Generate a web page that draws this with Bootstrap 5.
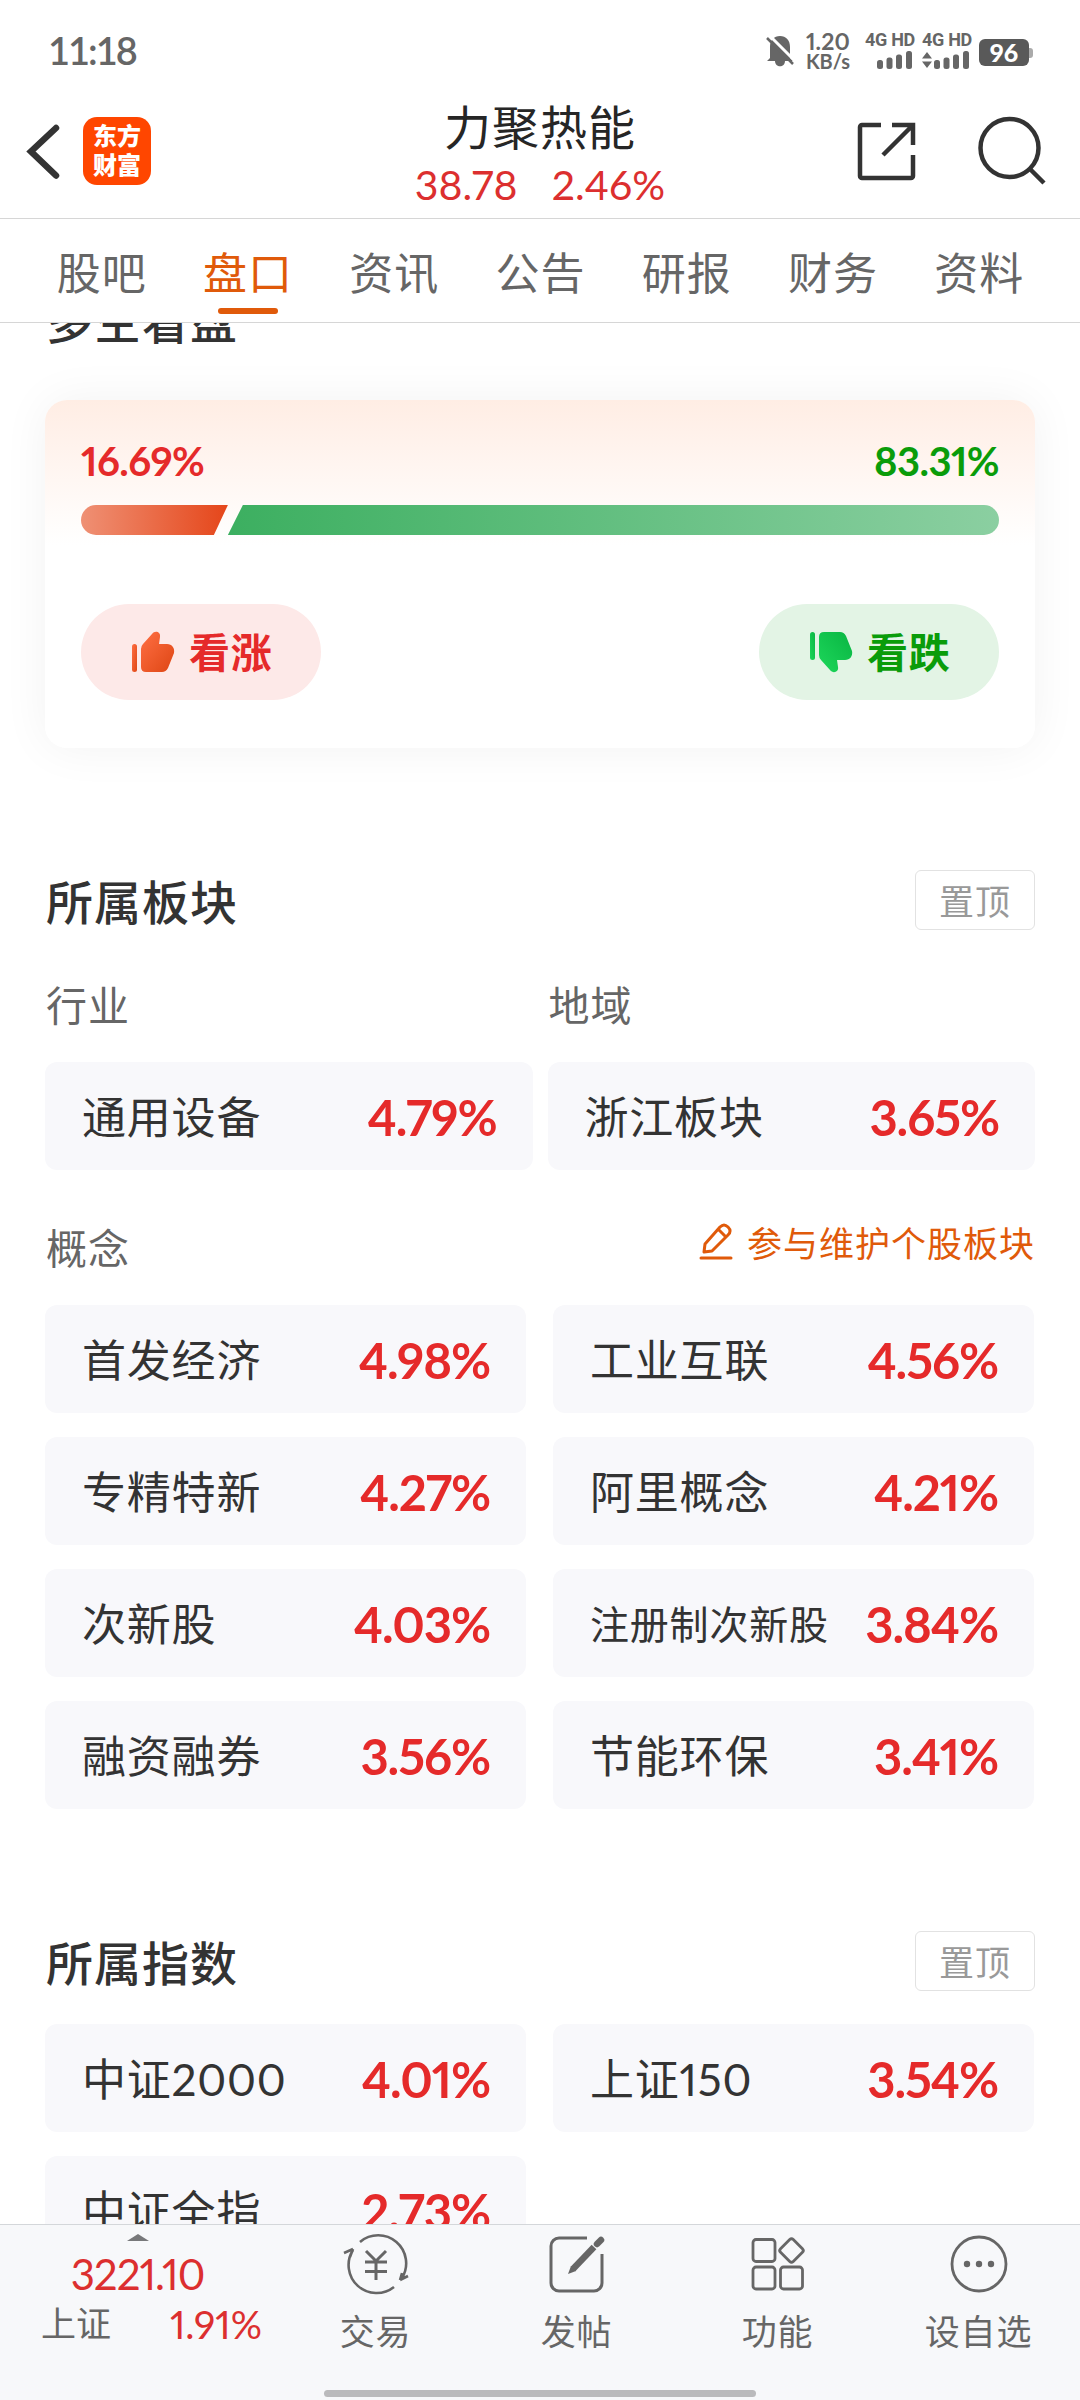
<!DOCTYPE html>
<html lang="zh-CN">
<head>
<meta charset="utf-8">
<meta name="viewport" content="width=device-width, initial-scale=1">
<title>力聚热能 - 盘口</title>
<link rel="stylesheet" href="https://cdn.jsdelivr.net/npm/bootstrap@5.3.0/dist/css/bootstrap.min.css">
<style>
  :root { --up:#e52a2a; --down:#0a9c0a; --ink:#333; --soft:#666; --brand:#e05a0a; }
  body { font-family:"Noto Sans CJK SC","Noto Sans",sans-serif; color:var(--ink); background:#fff; }
  svg { display:block; flex:none; overflow:visible; }
  .screen { width:1080px; height:2400px; overflow:hidden; }
  .num { font-family:Lato,"Noto Sans",sans-serif; white-space:nowrap; font-feature-settings:"pnum"; }
  .up { color:var(--up); } .down { color:var(--down); }

  .status { height:104px; padding:0 48px 0 48px; color:#666; }
  .clock { font-size:38px; font-weight:600; line-height:100px; letter-spacing:-2px; font-feature-settings:normal; }
  .sys { padding-top:32px; }
  .speed { width:46px; margin:0 14px 0 11px; font-weight:700; text-align:center; }
  .speed div { font-size:23px; line-height:19px; letter-spacing:.2px; }
  .speed div + div { font-size:20px; line-height:20px; letter-spacing:0; }
  .sim { width:48px; margin-right:9px; }
  .sim div { font:700 18px/15px Roboto,sans-serif; letter-spacing:-.3px; white-space:nowrap; }
  .sim svg { margin-top:-1px; }
  .power { width:50px; height:27px; margin:7px 3px 0 0; border-radius:6px; background:#595959; color:#fff; font-size:25px; font-weight:900; line-height:26px; position:relative; }
  .power::after { content:""; position:absolute; left:50px; top:9px; width:4px; height:10px; border-radius:0 3px 3px 0; background:#aaa; }

  .top { height:115px; border-bottom:1px solid #d6d6d6; }
  .side { width:300px; }
  .logo { width:68px; height:68px; margin-top:13px; border-radius:14px; background:#ff4600; color:#fff; font-size:24px; font-weight:900; line-height:29px; padding-top:3px; }
  .name { font-size:47px; line-height:50px; letter-spacing:1px; color:#262626; margin-top:-4px; }
  .quote { font-size:41px; line-height:50px; gap:34px; margin-top:10px; color:#dc2f2f; }

  .tabs { height:104px; padding:0 28px; border-bottom:1px solid #d6d6d6; }
  .tabs a { color:var(--soft); font-size:44px; line-height:86px; padding:9px 0 0 1px; letter-spacing:1px; text-decoration:none; text-align:center; }
  .tabs a.active { color:var(--brand); }
  .tabs a.active::after { content:""; display:block; width:60px; height:6px; border-radius:3px; background:var(--brand); margin:-6px auto 0; }

  main { padding:0 45px; min-height:0; }
  .sec { font-size:47px; font-weight:500; letter-spacing:1px; line-height:60px; margin:0; padding-left:1px; }
  .clipped { margin-top:-34px; margin-bottom:51px; }
  .poll { height:348px; border-radius:22px; padding:36px 36px 0; background:linear-gradient(#ffede4,#fff 145px); box-shadow:0 0 48px rgba(0,0,0,.055); }
  .poll .num { font-size:40px; font-weight:700; line-height:50px; letter-spacing:-.6px; }
  .sentiment { height:30px; margin-top:19px; border-radius:15px; overflow:hidden; }
  .sentiment i { display:block; height:30px; }
  .bull { flex:none; background:linear-gradient(90deg,#ef9074,#e5461a); clip-path:polygon(0 0,100% 0,calc(100% - 14px) 100%,0 100%); }
  .bear { background:linear-gradient(90deg,#3caf60,#8bcfa1); clip-path:polygon(15px 0,100% 0,100% 100%,0 100%); }
  .vote { width:240px; height:96px; border-radius:48px; font-size:41px; font-weight:600; line-height:93px; padding-left:50px; gap:14px; letter-spacing:.8px; }
  .vote.up { background:#fde9e8; } .vote.down { background:#e3f4e5; }
  .votes { margin-top:69px; }

  .pin { width:120px; height:60px; border:1px solid #e2e2e2; border-radius:6px; color:#999; font-size:35px; line-height:57px; letter-spacing:1px; text-align:center; }
  .lbl { font-size:41px; line-height:60px; color:var(--soft); letter-spacing:1px; padding-left:1px; }
  .tile { height:108px; border-radius:12px; background:#f8f8fb; padding:0 36px 0 37px; font-size:44px; letter-spacing:.8px; }
  .tile span { line-height:106px; }
  .tile .num { font-size:49px; font-weight:700; letter-spacing:-1.1px; line-height:110px; }
  .tile b { font-family:Lato,sans-serif; font-weight:400; font-feature-settings:"pnum"; }
  .tile .long { font-size:39px; letter-spacing:.8px; }
  .two { display:grid; grid-template-columns:1fr 1fr; gap:24px 27px; margin-right:1px; }
  .two.tight { gap:15px; margin-right:0; }
  .edit { color:var(--brand); font-size:35px; letter-spacing:1px; line-height:51px; gap:15px; }

  footer { height:176px; background:#f7f8fa; border-top:1px solid #d4d7da; color:var(--soft); font-size:35px; position:relative; }
  .market { width:275px; }
  .market .idx { font-size:42px; line-height:46px; text-align:center; width:275px; color:#dc2f2f; letter-spacing:-1px; margin-top:10px; }
  .market .chg { font-size:39px; line-height:54px; color:#dc2f2f; }
  .tool { width:201px; padding-top:8px; }
  .tool div { line-height:50px; margin-top:10px; letter-spacing:.8px; }
  .homebar { position:absolute; left:324px; top:165px; width:432px; height:7px; border-radius:4px; background:#bababc; }
</style>
</head>
<body>
<div class="screen d-flex flex-column">

  <div class="status d-flex justify-content-between flex-shrink-0">
    <div class="clock num">11:18</div>
    <div class="sys d-flex align-items-start">
      <svg width="28" height="34" viewBox="0 0 28 34" fill="#666"><path d="M4 26V15C4 8 8 4 14 4s10 4 10 11v11l3 3H1z"/><path d="M9 29h10c0 7-10 7-10 0z"/><path d="M3 3 29 29" stroke="#fff" stroke-width="3"/><path d="M1 6 27 32" stroke="#666" stroke-width="2.500"/></svg>
      <div class="speed num"><div>1.20</div><div>KB/s</div></div>
      <div class="sim"><div>4G HD</div>
        <svg width="48" height="22" viewBox="0 0 48 22" fill="#666"><rect x="12" y="14" width="6" height="9" rx="2.500"/><rect x="21.500" y="11.500" width="6" height="11.500" rx="2.500"/><rect x="31" y="8.500" width="6" height="14.500" rx="2.500"/><rect x="41" y="5" width="6" height="18" rx="2.500"/></svg></div>
      <div class="sim"><div>4G HD</div>
        <svg width="48" height="22" viewBox="0 0 48 22" fill="#666"><path d="M0 12.500 5 6l5 6.500zM0 15.500h10L5 22z"/><rect x="12" y="14" width="6" height="9" rx="2.500"/><rect x="21.500" y="11.500" width="6" height="11.500" rx="2.500"/><rect x="31" y="8.500" width="6" height="14.500" rx="2.500"/><rect x="41" y="5" width="6" height="18" rx="2.500"/></svg></div>
      <div class="power num text-center">96</div>
    </div>
  </div>

  <header class="top d-flex justify-content-between flex-shrink-0">
    <div class="side d-flex align-items-start">
      <svg width="83" height="100" viewBox="0 104 83 100" fill="none" stroke="#333" stroke-width="6.500" stroke-linecap="round" stroke-linejoin="miter"><path d="M56 128 31 151.500 56 175.500"/></svg>
      <div class="logo text-center"><div>东方</div><div>财富</div></div>
    </div>
    <div class="text-center">
      <div class="name">力聚热能</div>
      <div class="quote num d-flex justify-content-center"><span>38.78</span><span>2.46%</span></div>
    </div>
    <div class="side">
      <svg width="300" height="100" viewBox="780 104 300 100" fill="none" stroke="#333" stroke-width="4.500"><path d="M881 125H862a2 2 0 0 0-2 2V176a2 2 0 0 0 2 2H911a2 2 0 0 0 2-2V155M892 125h21v20M912 126 883 155"/><circle cx="1009.500" cy="148" r="29"/><path d="M1029 168 1044 183"/></svg>
    </div>
  </header>

  <nav class="tabs d-flex flex-shrink-0">
    <a class="flex-fill" href="#">股吧</a><a class="flex-fill active" href="#">盘口</a><a class="flex-fill" href="#">资讯</a><a class="flex-fill" href="#">公告</a><a class="flex-fill" href="#">研报</a><a class="flex-fill" href="#">财务</a><a class="flex-fill" href="#">资料</a>
  </nav>

  <main class="flex-fill overflow-hidden">
    <h2 class="sec clipped">多空看盘</h2>
    <section class="poll">
      <div class="d-flex justify-content-between"><span class="num up">16.69%</span><span class="num down">83.31%</span></div>
      <div class="sentiment d-flex"><i class="bull" style="width:16%"></i><i class="bear flex-fill"></i></div>
      <div class="votes d-flex justify-content-between">
        <div class="vote up d-flex">
          <svg class="align-self-center" width="44" height="42" viewBox="0 0 44 42"><defs><linearGradient id="gu" x1="0" y1="0" x2="1" y2="1"><stop offset="0" stop-color="#ff6f43"/><stop offset="1" stop-color="#de4614"/></linearGradient></defs><g fill="url(#gu)"><rect x="1" y="13" width="5" height="28" rx="2.500"/><path d="M10 18q0-3 2-5L21 3c3-4 9-2 8 3l-1 7h8c5 0 8 4 7 9l-6 15q-2 4-6 4H15q-5 0-5-5z"/></g></svg>
          <span>看涨</span></div>
        <div class="vote down d-flex">
          <svg class="align-self-center" width="44" height="42" viewBox="0 0 44 42"><defs><linearGradient id="gd" x1="0" y1="0" x2="1" y2="1"><stop offset="0" stop-color="#1dd75b"/><stop offset="1" stop-color="#09b542"/></linearGradient></defs><g fill="url(#gd)" transform="matrix(1 0 0 -1 0 42)"><rect x="1" y="13" width="5" height="28" rx="2.500"/><path d="M10 18q0-3 2-5L21 3c3-4 9-2 8 3l-1 7h8c5 0 8 4 7 9l-6 15q-2 4-6 4H15q-5 0-5-5z"/></g></svg>
          <span>看跌</span></div>
      </div>
    </section>

    <section style="margin-top:122px">
      <div class="d-flex justify-content-between"><h2 class="sec">所属板块</h2><div class="pin">置顶</div></div>
      <div class="two tight" style="margin-top:43px"><div class="lbl">行业</div><div class="lbl">地域</div></div>
      <div class="two tight" style="margin-top:29px">
        <div class="tile d-flex justify-content-between"><span>通用设备</span><span class="num up">4.79%</span></div>
        <div class="tile d-flex justify-content-between"><span>浙江板块</span><span class="num up">3.65%</span></div>
      </div>
      <div class="d-flex justify-content-between" style="margin-top:46px">
        <div class="lbl">概念</div>
        <div class="edit d-flex"><svg width="33" height="38" viewBox="0 0 33 38" style="margin-top:7px" fill="none" stroke="#e05a0a" stroke-width="3" stroke-linejoin="round" stroke-linecap="round"><path d="M2 35H32M5 29 6 21 21 4Q25 0 29 4 33 8 29 12L13 28zM20 7 26 13"/></svg><span>参与维护个股板块</span></div>
      </div>
      <div class="two" style="margin-top:29px">
        <div class="tile d-flex justify-content-between"><span>首发经济</span><span class="num up">4.98%</span></div>
        <div class="tile d-flex justify-content-between"><span>工业互联</span><span class="num up">4.56%</span></div>
        <div class="tile d-flex justify-content-between"><span>专精特新</span><span class="num up">4.27%</span></div>
        <div class="tile d-flex justify-content-between"><span>阿里概念</span><span class="num up">4.21%</span></div>
        <div class="tile d-flex justify-content-between"><span>次新股</span><span class="num up">4.03%</span></div>
        <div class="tile d-flex justify-content-between"><span class="long">注册制次新股</span><span class="num up">3.84%</span></div>
        <div class="tile d-flex justify-content-between"><span>融资融券</span><span class="num up">3.56%</span></div>
        <div class="tile d-flex justify-content-between"><span>节能环保</span><span class="num up">3.41%</span></div>
      </div>
    </section>

    <section style="margin-top:122px">
      <div class="d-flex justify-content-between"><h2 class="sec">所属指数</h2><div class="pin">置顶</div></div>
      <div class="two" style="margin-top:33px">
        <div class="tile d-flex justify-content-between"><span>中证<b>2000</b></span><span class="num up">4.01%</span></div>
        <div class="tile d-flex justify-content-between"><span>上证<b>150</b></span><span class="num up">3.54%</span></div>
        <div class="tile d-flex justify-content-between"><span>中证全指</span><span class="num up">2.73%</span></div>
      </div>
    </section>
  </main>

  <footer class="d-flex flex-shrink-0">
    <div class="market">
      <svg class="mx-auto" width="22" height="7" viewBox="0 0 22 7" style="margin-top:9px"><path d="M0 7 11 0 22 7z" fill="#77787a"/></svg>
      <div class="idx num">3221.10</div>
      <div class="d-flex justify-content-between" style="padding:0 13px 0 41px;line-height:50px"><span>上证</span><span class="num chg">1.91%</span></div>
    </div>
    <div class="tool text-center">
      <svg class="mx-auto" width="66" height="62" viewBox="0 0 66 62" fill="none" stroke="#666" stroke-width="2.600"><path d="M17 9A28 28 0 0 1 59 45M51 54A28 28 0 0 1 10 17M1 20 10 16M57 47l8-4M57 47l2-7M10 16 7 24"/><path d="m23 18 10 10 10-10M22 29H44M22 38.500H44M33 28V47" stroke-width="3"/></svg>
      <div>交易</div></div>
    <div class="tool text-center">
      <svg class="mx-auto" width="58" height="62" viewBox="0 0 58 62" fill="none" stroke="#666" stroke-width="3"><path d="M39 5H11A8 8 0 0 0 3 13V50A8 8 0 0 0 11 58H46A8 8 0 0 0 54 50V21"/><path d="M25 36 46 14" stroke-width="6.500"/><path d="m49 11 4-4" stroke-width="6.500" stroke-linecap="round"/><path d="m20 41 3-8 5 5z" fill="#666" stroke="none"/></svg>
      <div>发帖</div></div>
    <div class="tool text-center">
      <svg class="mx-auto" width="54" height="62" viewBox="0 0 54 62" fill="none" stroke="#666" stroke-width="2.800"><rect x="2" y="6.500" width="22" height="22" rx="3"/><rect x="2" y="34" width="22" height="22" rx="3"/><rect x="29.500" y="34" width="22" height="22" rx="3"/><rect x="31.500" y="8.500" width="18" height="18" rx="2.500" transform="rotate(45 40.500 17.500)"/></svg>
      <div>功能</div></div>
    <div class="tool text-center">
      <svg class="mx-auto" width="58" height="62" viewBox="0 0 58 62" fill="none" stroke="#666" stroke-width="2.800"><circle cx="29" cy="31" r="27"/><g fill="#666" stroke="none"><circle cx="17" cy="31" r="3.200"/><circle cx="29" cy="31" r="3.200"/><circle cx="41" cy="31" r="3.200"/></g></svg>
      <div>设自选</div></div>
    <span class="homebar"></span>
  </footer>
</div>
<script src="https://cdn.jsdelivr.net/npm/bootstrap@5.3.0/dist/js/bootstrap.bundle.min.js"></script>
</body>
</html>
